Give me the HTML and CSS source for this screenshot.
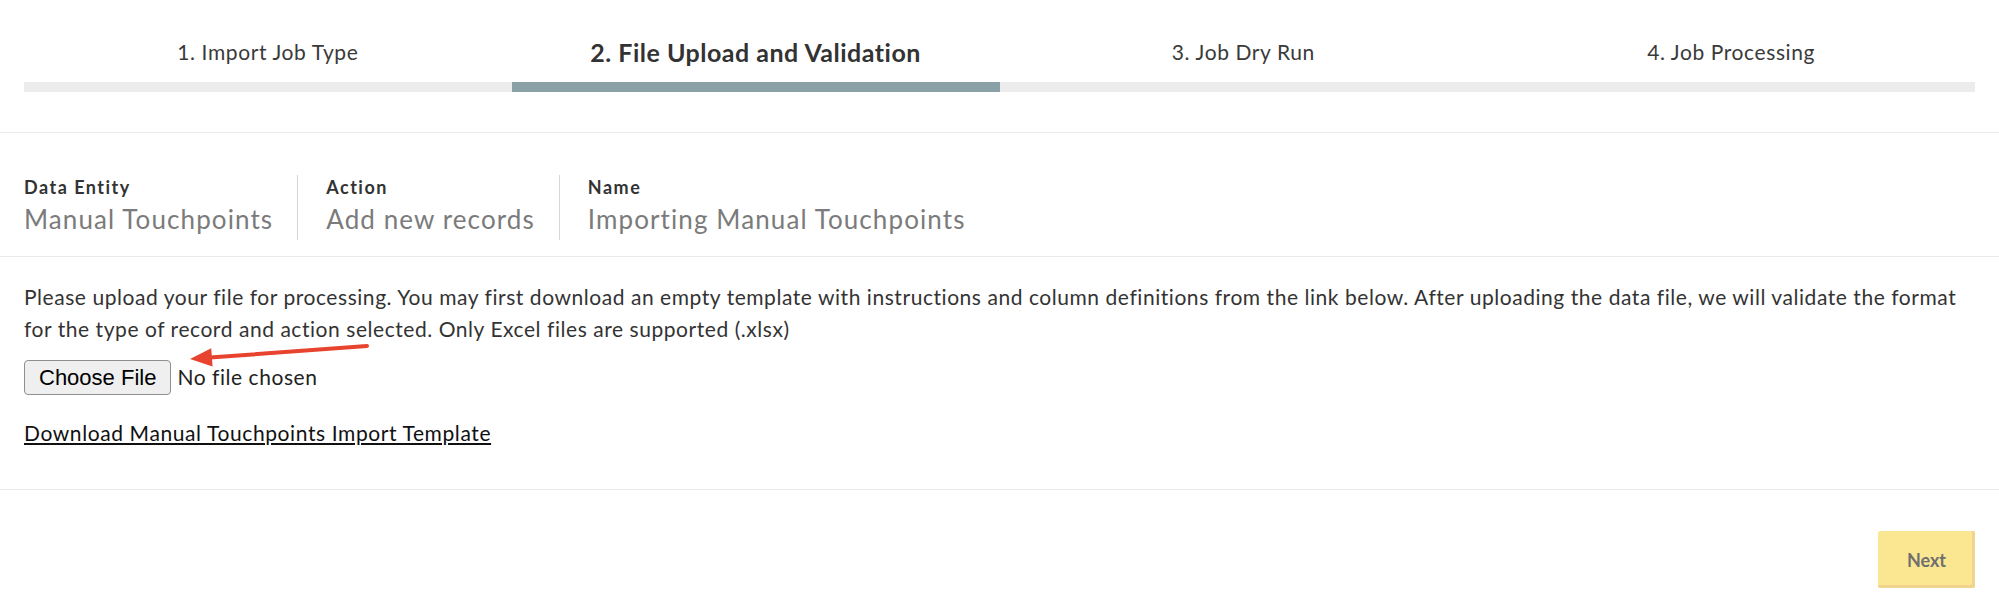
FILE: index.html
```html
<!DOCTYPE html>
<html lang="en">
<head>
    <meta charset="UTF-8">
    <meta name="viewport" content="width=device-width, initial-scale=1.0">
    <title>Import Job - File Upload and Validation</title>
    <link rel="stylesheet" href="styles.css">
</head>
<body>
    <header class="steps">
        <div class="step">
            <div class="step-label">1. Import Job Type</div>
            <div class="step-bar"></div>
        </div>
        <div class="step active">
            <div class="step-label">2. File Upload and Validation</div>
            <div class="step-bar"></div>
        </div>
        <div class="step">
            <div class="step-label">3. Job Dry Run</div>
            <div class="step-bar"></div>
        </div>
        <div class="step">
            <div class="step-label">4. Job Processing</div>
            <div class="step-bar"></div>
        </div>
    </header>

    <section class="summary">
        <div class="summary-item">
            <div class="summary-label">Data Entity</div>
            <div class="summary-value">Manual Touchpoints</div>
        </div>
        <div class="summary-item">
            <div class="summary-label">Action</div>
            <div class="summary-value">Add new records</div>
        </div>
        <div class="summary-item">
            <div class="summary-label">Name</div>
            <div class="summary-value">Importing Manual Touchpoints</div>
        </div>
    </section>

    <section class="upload">
        <p class="upload-text">Please upload your file for processing. You may first download an empty template with instructions and column definitions from the link below. After uploading the data file, we will validate the format for the type of record and action selected. Only Excel files are supported (.xlsx)</p>
        <input type="file" id="dataFile" class="file-input" accept=".xlsx">
        <a href="#" class="template-link">Download Manual Touchpoints Import Template</a>

        <!-- annotation arrow pointing at the file picker -->
        <svg class="arrow" width="200" height="32" viewBox="0 0 200 32">
            <line x1="187" y1="9" x2="30" y2="20.6" stroke="#e8432e" stroke-width="4" stroke-linecap="round"/>
            <polygon points="10,22 32.6,29.6 31.2,11.2" fill="#e8432e"/>
        </svg>
    </section>

    <footer class="actions">
        <button type="button" class="next-btn" disabled>Next</button>
    </footer>
</body>
</html>
```

FILE: styles.css
```css
body {
    font-family: Lato, "Open Sans", sans-serif;
    margin: 0;
    padding: 0;
    background: #fff;
    color: #333;
}

/* wizard steps */
.steps {
    display: grid;
    grid-template-columns: repeat(4, 1fr);
    padding: 38px 24px 40px;
    border-bottom: 1px solid #ebebeb;
}
.step-label {
    height: 28px;
    line-height: 28px;
    text-align: center;
    font-size: 21px;
    letter-spacing: 0.6px;
    color: #3a3a3a;
}
.step.active .step-label {
    font-size: 25px;
    font-weight: 700;
    letter-spacing: 0.5px;
    color: #333;
}
.step-bar {
    height: 10px;
    margin-top: 16px;
    background: #ececec;
}
.step.active .step-bar {
    background: #8aa1a8;
}

/* job summary */
.summary {
    display: flex;
    padding: 42px 24px 16px;
    border-bottom: 1px solid #ebebeb;
}
.summary-item {
    padding: 0 24px 0 28px;
    border-left: 1px solid #d6d6d6;
}
.summary-item:first-child {
    padding-left: 0;
    border-left: none;
}
.summary-label {
    font-size: 18px;
    font-weight: 700;
    line-height: 24px;
    letter-spacing: 1.5px;
    color: #333;
}
.summary-value {
    font-size: 26px;
    line-height: 41px;
    letter-spacing: 1.1px;
    color: #7b7b7b;
}

/* upload */
.upload {
    position: relative;
    padding: 24px 24px 40px;
    border-bottom: 1px solid #ebebeb;
}
.upload-text {
    margin: 0;
    font-size: 21px;
    line-height: 32px;
    letter-spacing: 0.55px;
    color: #333;
}
.file-input {
    display: block;
    margin-top: 15px;
    font-family: Lato, sans-serif;
    font-size: 21px;
    letter-spacing: 0.55px;
    color: #222;
}
.file-input::file-selector-button {
    font-family: "Liberation Sans", Arial, sans-serif;
    font-size: 22px;
    letter-spacing: 0;
    height: 35px;
    padding: 0 14px;
    margin-right: 6px;
    background: #efefef;
    color: #000;
    border: 1px solid #8f8f8f;
    border-radius: 4px;
}
.template-link {
    display: inline-block;
    margin-top: 22px;
    font-size: 21px;
    line-height: 32px;
    letter-spacing: 0.6px;
    color: #111;
    text-decoration: underline;
}
.arrow {
    position: absolute;
    left: 180px;
    top: 80px;
}

/* footer */
.actions {
    display: flex;
    justify-content: flex-end;
    padding: 41px 24px;
}
.next-btn {
    width: 97px;
    height: 57px;
    font-family: Lato, sans-serif;
    font-size: 18px;
    font-weight: 700;
    color: #6f6f6f;
    background: #fbe791;
    border: none;
    border-radius: 2px;
    box-shadow: inset -3px -3px 0 #f1d58e;
}
```
